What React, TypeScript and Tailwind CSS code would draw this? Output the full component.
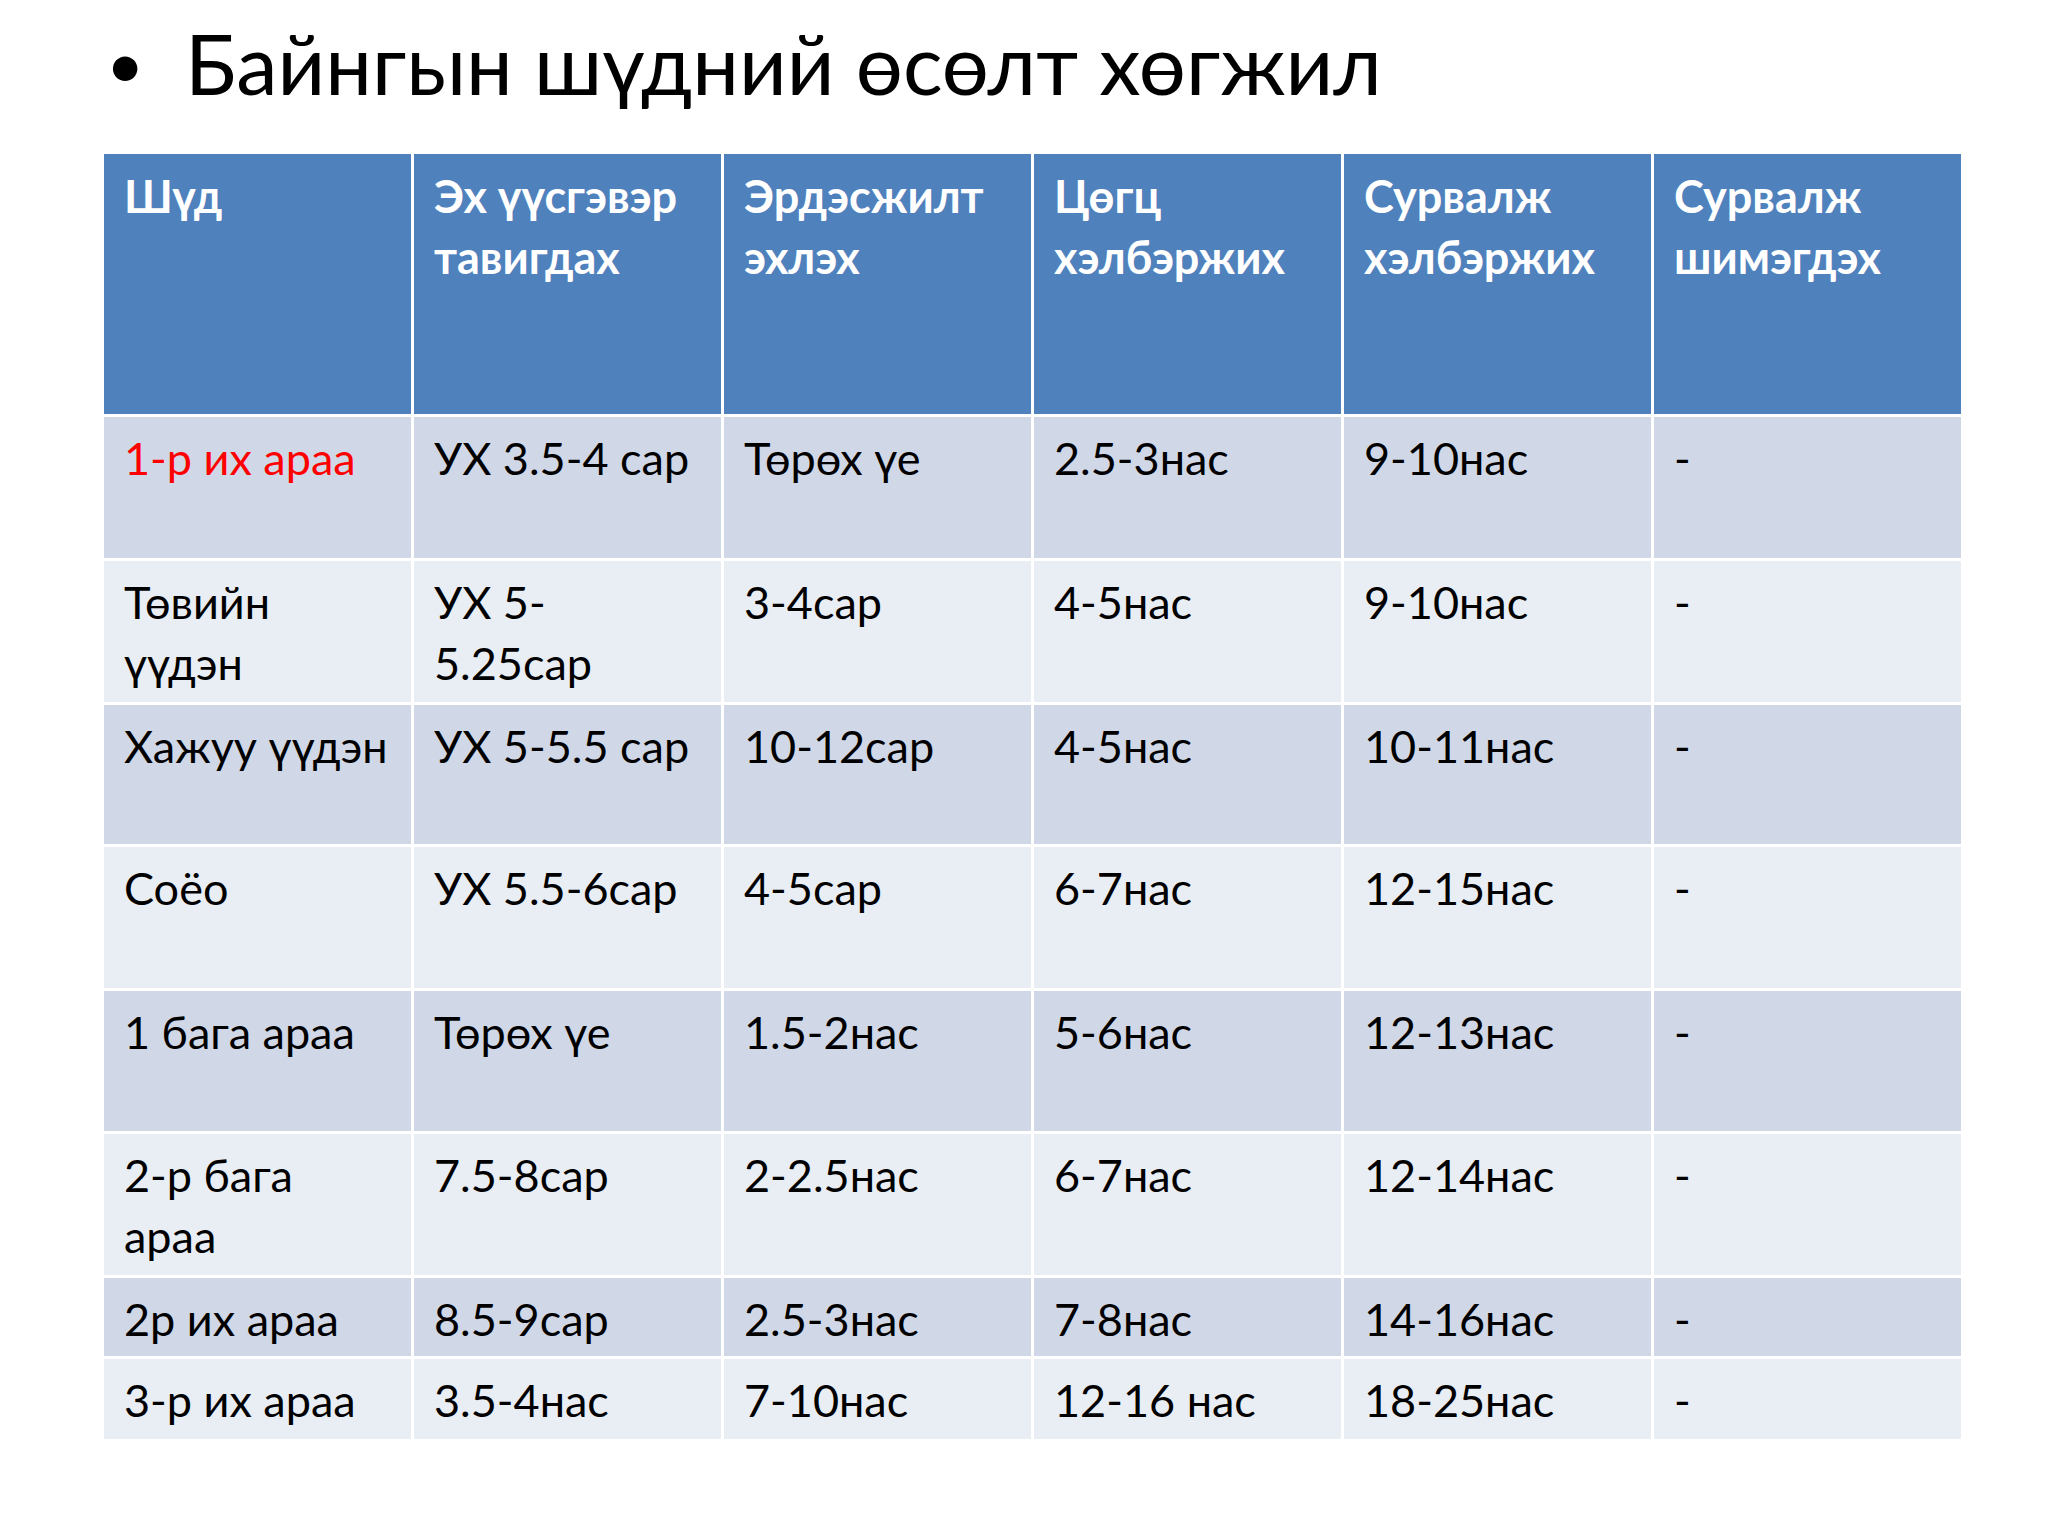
const header = [
  ["Шүд"],
  ["Эх үүсгэвэр", "тавигдах"],
  ["Эрдэсжилт", "эхлэх"],
  ["Цөгц", "хэлбэржих"],
  ["Сурвалж", "хэлбэржих"],
  ["Сурвалж", "шимэгдэх"],
];

type Row = { h: string; cells: string[][] };

const rows: Row[] = [
  { h: "h-[141px]", cells: [["1-р их араа"], ["УХ 3.5-4 сар"], ["Төрөх үе"], ["2.5-3нас"], ["9-10нас"], ["-"]] },
  { h: "h-[141px]", cells: [["Төвийн", "үүдэн"], ["УХ 5-", "5.25сар"], ["3-4сар"], ["4-5нас"], ["9-10нас"], ["-"]] },
  { h: "h-[139px]", cells: [["Хажуу үүдэн"], ["УХ 5-5.5 сар"], ["10-12сар"], ["4-5нас"], ["10-11нас"], ["-"]] },
  { h: "h-[141px]", cells: [["Соёо"], ["УХ 5.5-6сар"], ["4-5сар"], ["6-7нас"], ["12-15нас"], ["-"]] },
  { h: "h-[140px]", cells: [["1 бага араа"], ["Төрөх үе"], ["1.5-2нас"], ["5-6нас"], ["12-13нас"], ["-"]] },
  { h: "h-[141px]", cells: [["2-р бага", "араа"], ["7.5-8сар"], ["2-2.5нас"], ["6-7нас"], ["12-14нас"], ["-"]] },
  { h: "h-[78px]", cells: [["2р их араа"], ["8.5-9сар"], ["2.5-3нас"], ["7-8нас"], ["14-16нас"], ["-"]] },
  { h: "h-[80px]", cells: [["3-р их араа"], ["3.5-4нас"], ["7-10нас"], ["12-16 нас"], ["18-25нас"], ["-"]] },
];

export default function App() {
  return (
    <div className="w-[2048px] h-[1536px] bg-white font-['Lato','Noto_Sans',sans-serif] text-black">
      <div className="flex items-center pt-[8px] pl-[106px] h-[118px]">
        <span className="w-[79px] text-[66px] leading-[110px]">•</span>
        <h1 className="text-[83px] leading-[110px] font-normal whitespace-nowrap">Байнгын шүдний өсөлт хөгжил</h1>
      </div>

      <div className="ml-[104px] mt-[36px] w-[1857px] flex flex-col gap-[3px]">
        <div className="grid grid-cols-6 gap-[3px] h-[260px]">
          {header.map((lines, i) => (
            <div key={i} className="bg-[#4f81bd] text-white font-bold text-[45px] leading-[61px] px-[20px] pt-[12px] whitespace-nowrap">
              {lines.map((l, j) => (
                <div key={j}>{l}</div>
              ))}
            </div>
          ))}
        </div>

        {rows.map((row, r) => (
          <div key={r} className={`grid grid-cols-6 gap-[3px] ${row.h}`}>
            {row.cells.map((lines, c) => (
              <div
                key={c}
                className={`${r % 2 === 0 ? "bg-[#d0d8e8]" : "bg-[#e9edf4]"} ${
                  r === 0 && c === 0 ? "text-[#ff0000]" : "text-black"
                } text-[45px] leading-[61px] px-[20px] pt-[11px] whitespace-nowrap`}
              >
                {lines.map((l, j) => (
                  <div key={j}>{l}</div>
                ))}
              </div>
            ))}
          </div>
        ))}
      </div>
    </div>
  );
}
